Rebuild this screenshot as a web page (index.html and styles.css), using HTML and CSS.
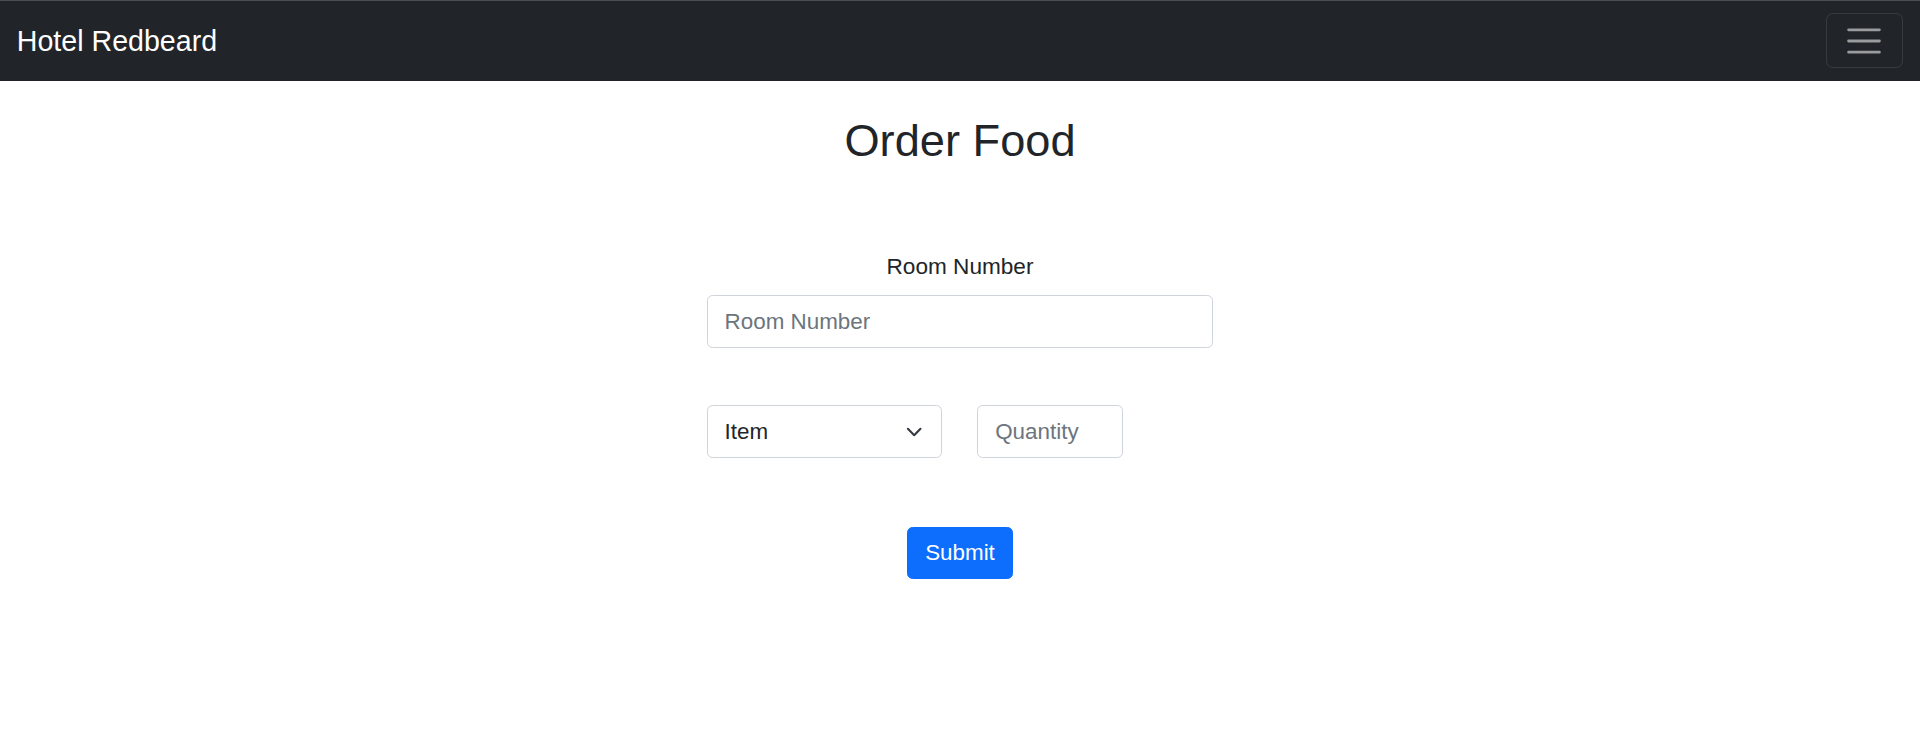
FILE: index.html
```html
<!DOCTYPE html>
<html lang="en">
<head>
<meta charset="utf-8">
<title>Order Food - Hotel Redbeard</title>
<link rel="stylesheet" href="styles.css">
</head>
<body>
<nav class="navbar">
  <div class="navbar-inner">
    <a class="brand" href="#">Hotel Redbeard</a>
    <button class="toggler" type="button" aria-label="Toggle navigation">
      <svg class="toggler-icon" viewBox="0 0 30 30" width="42" height="42" aria-hidden="true">
        <path d="M4 7h22M4 15h22M4 23h22" stroke="rgba(255,255,255,0.55)" stroke-width="2" stroke-linecap="round" stroke-miterlimit="10" fill="none"/>
      </svg>
    </button>
  </div>
</nav>
<main class="main">
  <h2 class="title">Order Food</h2>
  <form class="order-form">
    <div class="field">
      <label class="label" for="room">Room Number</label>
      <input class="control" id="room" type="text" placeholder="Room Number">
    </div>
    <div class="item-row">
      <div class="select-wrap">
        <select class="control select" aria-label="Item">
          <option>Item</option>
        </select>
        <svg class="chevron" viewBox="0 0 16 16" width="22.4" height="16.8" aria-hidden="true">
          <path d="m2 5 6 6 6-6" fill="none" stroke="#343a40" stroke-linecap="round" stroke-linejoin="round" stroke-width="2"/>
        </svg>
      </div>
      <input class="control qty" type="text" placeholder="Quantity">
    </div>
    <div class="actions">
      <button class="btn-primary" type="button">Submit</button>
    </div>
  </form>
</main>
</body>
</html>
```

FILE: styles.css
```css
* { box-sizing: border-box; }

html, body {
  margin: 0;
  padding: 0;
  background: #fff;
}

body {
  font-family: "Liberation Sans", Arial, sans-serif;
  font-size: 22.4px;
  line-height: 1.5;
  color: #212529;
}

.navbar {
  background: #212529;
  border-top: 1px solid #4b4d50;
  height: 81px;
}

.navbar-inner {
  height: 100%;
  padding: 0 16.8px;
  display: flex;
  align-items: center;
  justify-content: space-between;
}

.brand {
  color: #fff;
  text-decoration: none;
  font-size: 28.6px;
  line-height: 42px;
  padding: 7px 0;
}

.toggler {
  background: transparent;
  border: 1.4px solid rgba(255, 255, 255, 0.1);
  border-radius: 7px;
  padding: 5.6px 16.8px;
  margin-top: -1px;
  display: flex;
  align-items: center;
  justify-content: center;
  cursor: pointer;
}

.toggler-icon {
  display: block;
  width: 42px;
  height: 42px;
}

.main {
  padding-top: 32.6px;
  display: flex;
  flex-direction: column;
  align-items: center;
}

.title {
  margin: 0 0 11.2px;
  font-size: 45.2px;
  line-height: 53.76px;
  font-weight: normal;
}

.order-form {
  width: 506.4px;
  margin-top: 71.6px;
  display: flex;
  flex-direction: column;
}

.field {
  display: flex;
  flex-direction: column;
  align-items: center;
}

.label {
  margin-bottom: 11.2px;
  line-height: 33.6px;
  font-size: 22.6px;
}

.control {
  display: block;
  width: 100%;
  height: 53.2px;
  padding: 8.4px 16.8px;
  font-family: inherit;
  font-size: 22.4px;
  line-height: 1.5;
  color: #212529;
  background: #fff;
  border: 1.4px solid #ced4da;
  border-radius: 5.6px;
  outline: none;
}

.control::placeholder {
  color: #6c757d;
  opacity: 1;
}

.item-row {
  margin-top: 57px;
  display: flex;
  gap: 35px;
}

.select-wrap {
  position: relative;
  width: 235.6px;
}

.select {
  appearance: none;
  -webkit-appearance: none;
  padding-right: 50.4px;
}

.chevron {
  position: absolute;
  right: 16.8px;
  top: 50%;
  transform: translateY(-50%);
  pointer-events: none;
}

.qty {
  width: 145.6px;
}

.actions {
  margin-top: 68.8px;
  display: flex;
  justify-content: center;
}

.btn-primary {
  font-family: inherit;
  font-size: 22.4px;
  line-height: 1.5;
  color: #fff;
  background: #0d6efd;
  border: 1.4px solid #0d6efd;
  border-radius: 5.6px;
  padding: 8.4px 16.8px;
  cursor: pointer;
}
```
